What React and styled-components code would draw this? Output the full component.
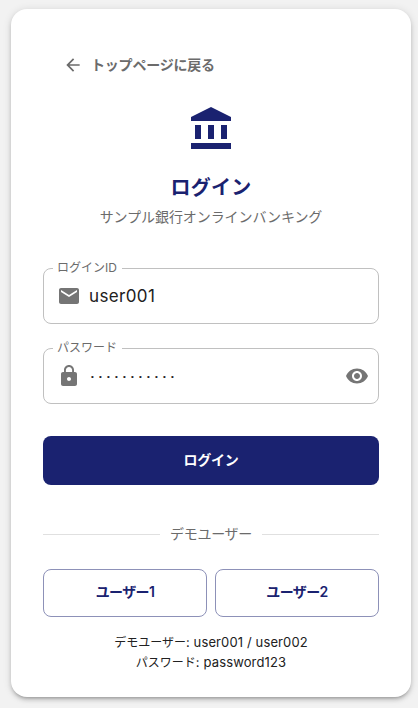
import React from "react";
import styled, { createGlobalStyle } from "styled-components";

const navy = "#1a2270";
const gray = "#6b6b6b";

const GlobalStyle = createGlobalStyle`
  * { box-sizing: border-box; }
  body {
    margin: 0;
    background: #f2f2f2;
    font-family: Inter, "Noto Sans CJK JP", sans-serif;
    color: #212121;
  }
  button { font-family: inherit; cursor: pointer; }
`;

const Page = styled.main`
  height: 708px;
  padding: 9px 7px 11px 11px;
  overflow: hidden;
`;

const Card = styled.section`
  height: 688px;
  padding: 32px;
  display: flex;
  flex-direction: column;
  background: #fff;
  border-radius: 16px;
  box-shadow: 0 3px 3px -2px rgba(0, 0, 0, 0.2), 0 3px 4px rgba(0, 0, 0, 0.14),
    0 1px 8px rgba(0, 0, 0, 0.12);

  & > * { flex-shrink: 0; }
`;

const Icon = styled.svg`
  display: block;
  flex: none;
  width: ${(p) => p.$size}px;
  height: ${(p) => p.$size}px;
  fill: currentColor;
`;

const BackButton = styled.button`
  align-self: flex-start;
  display: flex;
  align-items: center;
  gap: 8px;
  height: 48px;
  padding: 0 20px;
  border: 0;
  background: none;
  color: ${gray};
  font-size: 14px;
  font-weight: 600;
  line-height: 24px;
  letter-spacing: -0.2px;
`;

const Header = styled.header`
  display: flex;
  flex-direction: column;
  align-items: center;
  margin-top: 16px;
  color: ${navy};
`;

const Title = styled.h1`
  margin: 19px 0 0;
  font-size: 20px;
  font-weight: 600;
  line-height: 32px;
  letter-spacing: 0.3px;
`;

const Subtitle = styled.p`
  margin: 3px 0 0;
  color: ${gray};
  font-size: 14px;
  line-height: 20px;
  letter-spacing: -0.08px;
`;

const Fields = styled.div`
  display: flex;
  flex-direction: column;
  gap: 16px;
  margin-top: 33px;
`;

const Field = styled.fieldset`
  height: 64px;
  min-width: 0;
  margin: 0;
  padding: 0 9px 0 9px;
  border: 1px solid #c0c0c0;
  border-radius: 8px;
`;

const Legend = styled.legend`
  height: 16px;
  padding: 0 5px 0 4px;
  color: ${gray};
  font-size: 12px;
  line-height: 16px;
`;

const FieldRow = styled.div`
  display: flex;
  align-items: center;
  height: 40px;
  padding-left: 4px;
  color: #757575;
`;

const Value = styled.span`
  flex: 1;
  margin-left: 8px;
  color: #212121;
  font-size: 17px;
  line-height: 24px;
  letter-spacing: 0.35px;
`;

const Masked = styled(Value)`
  font-family: "Liberation Sans", sans-serif;
  font-size: 8px;
  letter-spacing: 5.2px;
  margin-left: 10px;
  padding-top: 2px;
`;

const LoginButton = styled.button`
  height: 49px;
  margin-top: 32px;
  padding: 0 0 3px;
  border: 0;
  border-radius: 8px;
  background: ${navy};
  color: #fff;
  font-size: 14px;
  font-weight: 600;
  letter-spacing: -0.3px;
`;

const Divider = styled.div`
  display: flex;
  align-items: center;
  gap: 10px;
  height: 20px;
  margin-top: 39px;
  color: ${gray};
  font-size: 14px;
  line-height: 20px;
  letter-spacing: -0.3px;

  &::before, &::after {
    content: "";
    flex: 1;
    height: 1px;
    background: #e0e0e0;
  }
`;

const DemoButtons = styled.div`
  display: grid;
  grid-template-columns: 1fr 1fr;
  gap: 8px;
  margin-top: 25px;
`;

const DemoButton = styled.button`
  height: 48px;
  padding: 0 0 4px;
  border: 1px solid #8d91b8;
  border-radius: 8px;
  background: #fff;
  color: ${navy};
  font-size: 14px;
  font-weight: 600;
  letter-spacing: -0.6px;
`;

const Hint = styled.p`
  margin: 15px 0 0;
  font-size: 12px;
  line-height: 20px;
  text-align: center;
`;

const HintLine = styled.span`
  display: block;
  height: 20px;
`;

const Latin = styled.span`
  font-size: 13px;
  letter-spacing: 0.13px;
`;

export default function App() {
  return (
    <>
      <GlobalStyle />
      <Page>
        <Card>
          <BackButton>
            <Icon $size={20} viewBox="0 0 24 24">
              <path d="M20 11H7.83l5.59-5.59L12 4l-8 8 8 8 1.41-1.41L7.83 13H20z" />
            </Icon>
            トップページに戻る
          </BackButton>
          <Header>
            <Icon $size={48} viewBox="0 0 24 24">
              <path d="M12 1 2 6v2h20V6zM4 10h3v7H4zm6.5 0h3v7h-3zm6.5 0h3v7h-3zM2 19h20v3H2z" />
            </Icon>
            <Title>ログイン</Title>
            <Subtitle>サンプル銀行オンラインバンキング</Subtitle>
          </Header>
          <Fields>
            <Field>
              <Legend>ログインID</Legend>
              <FieldRow>
                <Icon $size={24} viewBox="0 0 24 24">
                  <path d="M20 4H4c-1.1 0-1.99.9-1.99 2L2 18c0 1.1.9 2 2 2h16c1.1 0 2-.9 2-2V6c0-1.1-.9-2-2-2m0 4-8 5-8-5V6l8 5 8-5z" />
                </Icon>
                <Value>user001</Value>
              </FieldRow>
            </Field>
            <Field>
              <Legend>パスワード</Legend>
              <FieldRow>
                <Icon $size={24} viewBox="0 0 24 24">
                  <path d="M18 8h-1V6c0-2.76-2.24-5-5-5S7 3.24 7 6v2H6c-1.1 0-2 .9-2 2v10c0 1.1.9 2 2 2h12c1.1 0 2-.9 2-2V10c0-1.1-.9-2-2-2m-6 9c-1.1 0-2-.9-2-2s.9-2 2-2 2 .9 2 2-.9 2-2 2m3.1-9H8.9V6c0-1.71 1.39-3.1 3.1-3.1s3.1 1.39 3.1 3.1z" />
                </Icon>
                <Masked>•••••••••••</Masked>
                <Icon $size={24} viewBox="0 0 24 24">
                  <path d="M12 4.5C7 4.5 2.73 7.61 1 12c1.73 4.39 6 7.5 11 7.5s9.27-3.11 11-7.5c-1.73-4.39-6-7.5-11-7.5M12 17c-2.76 0-5-2.24-5-5s2.24-5 5-5 5 2.24 5 5-2.24 5-5 5m0-8c-1.66 0-3 1.34-3 3s1.34 3 3 3 3-1.34 3-3-1.34-3-3-3" />
                </Icon>
              </FieldRow>
            </Field>
          </Fields>
          <LoginButton>ログイン</LoginButton>
          <Divider>デモユーザー</Divider>
          <DemoButtons>
            <DemoButton>ユーザー1</DemoButton>
            <DemoButton>ユーザー2</DemoButton>
          </DemoButtons>
          <Hint>
            <HintLine>デモユーザー<Latin>: user001 / user002</Latin></HintLine>
            <HintLine>パスワード<Latin>: password123</Latin></HintLine>
          </Hint>
        </Card>
      </Page>
    </>
  );
}
